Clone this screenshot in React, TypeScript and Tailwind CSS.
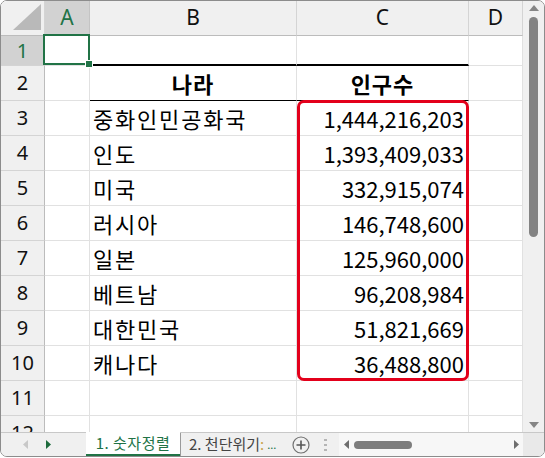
import React from 'react'

const cjk = "font-['Noto_Sans_CJK_KR','Noto_Sans',sans-serif]"
const ui = "font-['Noto_Sans','Noto_Sans_CJK_KR',sans-serif]"

const countries: [string, string][] = [
  ['중화인민공화국', '1,444,216,203'],
  ['인도', '1,393,409,033'],
  ['미국', '332,915,074'],
  ['러시아', '146,748,600'],
  ['일본', '125,960,000'],
  ['베트남', '96,208,984'],
  ['대한민국', '51,821,669'],
  ['캐나다', '36,488,800'],
]

function RowHead({ n, selected = false, tall = true }: { n: number; selected?: boolean; tall?: boolean }) {
  return (
    <div
      className={`flex items-center justify-center border-r border-b border-r-[#bcbcbc] border-b-[#d4d4d4] text-[20px] ${ui} ${
        tall ? 'h-[35px]' : 'h-[30px]'
      } ${selected ? 'bg-[#d2d2d2] text-[#217346]' : 'bg-[#f0f0f0] text-[#111]'}`}
    >
      {n}
    </div>
  )
}

function Cell({ className = '', children }: { className?: string; children?: React.ReactNode }) {
  return (
    <div className={`flex items-center border-r border-b border-[#e1e1e1] text-[22px] text-black whitespace-nowrap ${cjk} ${className}`}>
      {children}
    </div>
  )
}

function Grid() {
  return (
    <div className="relative h-[431px] w-[522px] overflow-hidden bg-white">
      <div className="grid grid-cols-[44px_45px_207px_172px_54px]">
        {/* column headers */}
        <div className="relative h-[35px] border-r border-b border-r-[#d4d4d4] border-b-[#bcbcbc] bg-[#f0f0f0]">
          <svg className="absolute left-0 top-0" width="44" height="35" viewBox="0 0 44 35">
            <polygon points="40,3 40,29 12,29" fill="#b9b9b9" />
          </svg>
        </div>
        <div className={`flex h-[35px] items-center justify-center border-r border-b border-r-[#c4c4c4] border-b-[#bcbcbc] bg-[#d2d2d2] text-[21px] text-[#217346] ${ui}`}>
          A
        </div>
        {['B', 'C', 'D'].map(c => (
          <div
            key={c}
            className={`flex h-[35px] items-center justify-center border-r border-b border-r-[#d4d4d4] border-b-[#bcbcbc] bg-[#f0f0f0] text-[21px] text-[#111] ${ui}`}
          >
            {c}
          </div>
        ))}

        {/* row 1 */}
        <RowHead n={1} selected tall={false} />
        <Cell className="h-[30px]" />
        <Cell className="h-[30px] border-b-2 border-b-black" />
        <Cell className="h-[30px] border-b-2 border-b-black" />
        <Cell className="h-[30px]" />

        {/* row 2 */}
        <RowHead n={2} />
        <Cell className="h-[35px]" />
        <Cell className="h-[35px] justify-center border-b-black font-bold tracking-[1px]">나라</Cell>
        <Cell className="h-[35px] justify-center border-b-black font-bold tracking-[1px]">인구수</Cell>
        <Cell className="h-[35px]" />

        {countries.map(([name, pop], i) => (
          <React.Fragment key={name}>
            <RowHead n={i + 3} />
            <Cell className="h-[35px]" />
            <Cell className="h-[35px] pl-[3px] tracking-[1.8px]">{name}</Cell>
            <Cell className="h-[35px] justify-end pr-[4px]">{pop}</Cell>
            <Cell className="h-[35px]" />
          </React.Fragment>
        ))}

        {[11, 12].map(n => (
          <React.Fragment key={n}>
            <RowHead n={n} />
            <Cell className="h-[35px]" />
            <Cell className="h-[35px]" />
            <Cell className="h-[35px]" />
            <Cell className="h-[35px]" />
          </React.Fragment>
        ))}
      </div>

      {/* selected cell A1 */}
      <div className="absolute left-[42px] top-[33px] h-[31px] w-[47px] border-2 border-[#217346]">
        <div className="absolute -bottom-[4px] -right-[4px] h-[6px] w-[6px] bg-[#217346] outline outline-1 outline-white" />
      </div>

      {/* highlight box */}
      <div className="absolute left-[296px] top-[99px] h-[281px] w-[172px] rounded-[7px] border-[3px] border-[#e3001b]" />
    </div>
  )
}

function VScroll() {
  return (
    <div className="flex h-[431px] w-[21px] flex-col items-center bg-[#f0f0f0]">
      <svg className="mt-[4px]" width="10" height="6" viewBox="0 0 10 6">
        <polygon points="5,0 10,6 0,6" fill="#858585" />
      </svg>
      <div className="mt-[6px] h-[220px] w-[9px] rounded-full bg-[#838383]" />
      <div className="flex-1" />
      <svg className="mb-[4px]" width="10" height="6" viewBox="0 0 10 6">
        <polygon points="0,0 10,0 5,6" fill="#858585" />
      </svg>
    </div>
  )
}

function TabBar() {
  return (
    <div className={`flex h-[24px] border-t border-[#c8c8c8] bg-[#f0f0f0] ${cjk}`}>
      <div className="flex w-[85px] items-center">
        <svg className="ml-[22px]" width="5" height="9" viewBox="0 0 5 9">
          <polygon points="5,0 5,9 0,4.5" fill="#c8c8c8" />
        </svg>
        <svg className="ml-[18px]" width="5" height="9" viewBox="0 0 5 9">
          <polygon points="0,0 5,4.5 0,9" fill="#1d6b3c" />
        </svg>
      </div>
      <div className="-mt-px flex h-[24px] w-[94px] items-center justify-center border-b-2 border-[#217346] bg-white text-[15px] tracking-[0.5px] text-[#217346]">
        1. 숫자정렬
      </div>
      <div className="flex w-[111px] items-center border-l border-[#9a9a9a] pl-[8px] text-[15px] whitespace-nowrap text-[#444]">
        2. 천단위기<span className="text-[#c9a24a]">:</span>
        <span className="ml-[3px] text-[11px] text-[#217346]">...</span>
      </div>
      <div className="flex w-[20px] items-center justify-center">
        <svg width="18" height="18" viewBox="0 0 18 18">
          <circle cx="9" cy="9" r="8" fill="none" stroke="#707070" strokeWidth="1.2" />
          <path d="M9 4.5v9M4.5 9h9" stroke="#555" strokeWidth="1.6" />
        </svg>
      </div>
      <div className="flex w-[28px] items-center justify-center">
        <svg width="3" height="12" viewBox="0 0 3 12">
          <rect x="0" y="0" width="3" height="2" fill="#b5b5b5" />
          <rect x="0" y="5" width="3" height="2" fill="#b5b5b5" />
          <rect x="0" y="10" width="3" height="2" fill="#b5b5b5" />
        </svg>
      </div>
      <div className="flex w-[184px] items-center bg-[#f7f7f7]">
        <svg className="ml-[5px]" width="5" height="9" viewBox="0 0 5 9">
          <polygon points="5,0 5,9 0,4.5" fill="#6e6e6e" />
        </svg>
        <div className="ml-[5px] h-[8px] w-[58px] rounded-full bg-[#7d7d7d]" />
        <div className="flex-1" />
        <svg className="mr-[4px]" width="5" height="9" viewBox="0 0 5 9">
          <polygon points="0,0 5,4.5 0,9" fill="#6e6e6e" />
        </svg>
      </div>
      <div className="w-[21px] bg-[#e9e9e9]" />
    </div>
  )
}

export default function App() {
  return (
    <div className="h-[458px] w-[545px] bg-white">
      <div className="flex h-[457px] w-[545px] flex-col overflow-hidden rounded-[7px] border border-[#8c8c8c] bg-white">
        <div className="flex h-[431px]">
          <Grid />
          <VScroll />
        </div>
        <TabBar />
      </div>
    </div>
  )
}
